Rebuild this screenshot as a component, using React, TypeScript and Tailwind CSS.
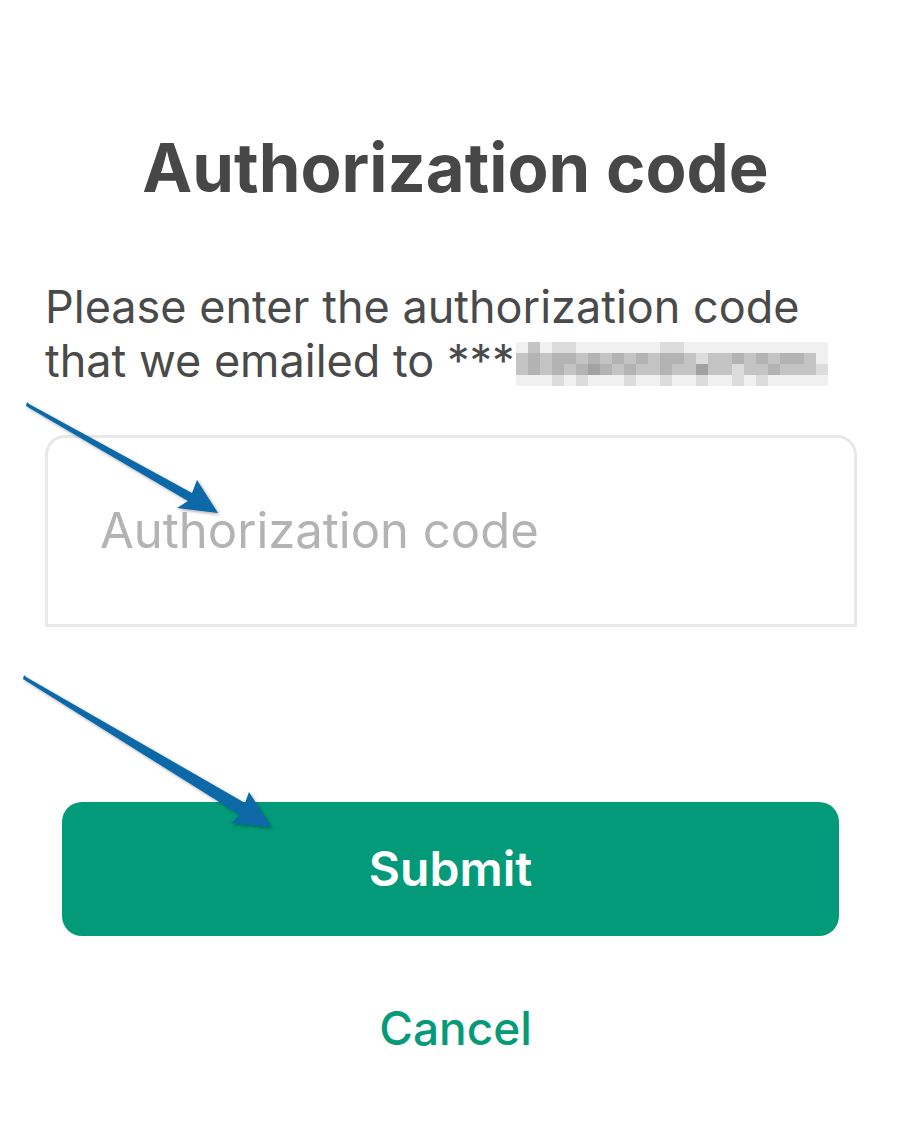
const mosaic = [
  [0, 2, 0, 1, 1, 0, 0, 0, 0, 0, 0, 0, 1, 1, 0, 0, 0, 0, 0, 0, 0, 0, 0, 0, 0, 0],
  [2, 3, 2, 3, 3, 2, 3, 2, 3, 2, 3, 2, 3, 3, 2, 1, 2, 2, 3, 2, 3, 2, 3, 3, 2, 0],
  [2, 3, 2, 3, 2, 3, 4, 3, 2, 3, 2, 2, 3, 2, 2, 4, 2, 2, 1, 2, 2, 3, 2, 2, 2, 1],
  [0, 0, 0, 1, 0, 1, 0, 0, 0, 1, 0, 0, 1, 0, 0, 1, 0, 0, 1, 0, 1, 0, 0, 0, 0, 0],
];

const shades = ['bg-[#f0f0f0]', 'bg-[#dcdcdc]', 'bg-[#c4c4c4]', 'bg-[#b3b3b3]', 'bg-[#a2a2a2]'];

function Arrows() {
  return (
    <svg className="absolute inset-0 pointer-events-none" width="911" height="1137" viewBox="0 0 911 1137">
      <defs>
        <filter id="sh" x="-10%" y="-10%" width="130%" height="130%">
          <feDropShadow dx="1.5" dy="1.5" stdDeviation="1.5" floodColor="#000" floodOpacity="0.35" />
        </filter>
      </defs>
      <polygon
        filter="url(#sh)"
        fill="#0868a8"
        points="27,402 29,404 192,493 197,480 218,513 177,508 188,501 26,406"
      />
      <polygon
        filter="url(#sh)"
        fill="#0868a8"
        points="24,675 26,677 245,803 249,792 271,827 231,823 240,815 23,679"
      />
    </svg>
  );
}

export default function App() {
  return (
    <div className="relative h-[1137px] w-[911px] bg-white overflow-hidden" style={{ fontFamily: 'Inter, "Noto Sans", sans-serif' }}>
      <h1 className="pt-[128px] text-center text-[67px] leading-[80px] font-bold text-[#474747]">
        Authorization code
      </h1>

      <p className="mt-[72px] px-[45px] text-[45px] leading-[54px] text-[#4a4a4a] whitespace-nowrap">
        Please enter the authorization code
        <br />
        that we emailed to ***
        <span className="inline-block overflow-hidden align-[-9px] ml-[1px] h-[44px]">
          <span className="grid grid-cols-[repeat(26,12px)]">
            {mosaic.flat().map((v, i) => (
              <span key={i} className={`h-[11px] ${shades[v]}`} />
            ))}
          </span>
        </span>
      </p>

      <div className="ml-[45px] mr-[54px] mt-[47px] h-[192px] rounded-t-[20px] border-[3px] border-[#e8e8e8] flex items-center px-[52px]">
        <span className="text-[49px] text-[#b3b3b3]">Authorization code</span>
      </div>

      <button className="mx-[62px] mt-[175px] h-[134px] w-[777px] rounded-[20px] bg-[#029a78] text-white text-[48px] font-semibold">
        Submit
      </button>

      <div className="mt-[58px] text-center text-[46px] font-medium text-[#079a78]">Cancel</div>

      <Arrows />
    </div>
  );
}
